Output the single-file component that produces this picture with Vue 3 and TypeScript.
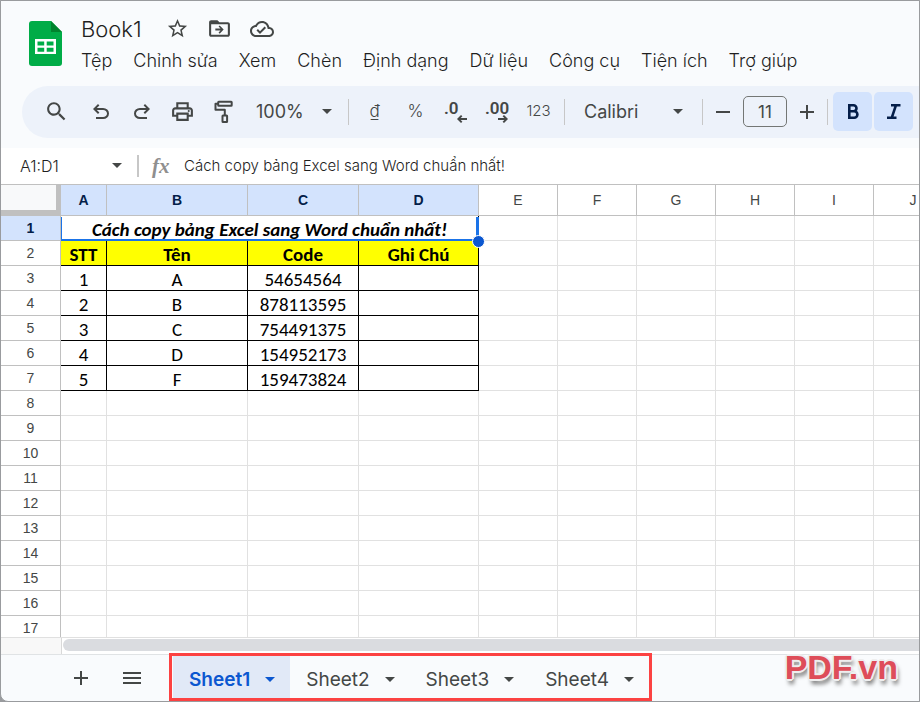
<script setup lang="ts">
import { ref } from 'vue'

interface Column { name: string; width: number }

const menus = ['Tệp', 'Chỉnh sửa', 'Xem', 'Chèn', 'Định dạng', 'Dữ liệu', 'Công cụ', 'Tiện ích', 'Trợ giúp']

const columns: Column[] = [
  { name: 'A', width: 46 },
  { name: 'B', width: 141 },
  { name: 'C', width: 111 },
  { name: 'D', width: 120 },
  ...['E', 'F', 'G', 'H', 'I', 'J'].map((name) => ({ name, width: 79 })),
]
const selectedColumns = 4
const tableWidth = 60 + columns.reduce((sum, c) => sum + c.width, 0)

const title = 'Cách copy bảng Excel sang Word chuẩn nhất!'
const data: string[][] = [
  ['STT', 'Tên', 'Code', 'Ghi Chú'],
  ['1', 'A', '54654564', ''],
  ['2', 'B', '878113595', ''],
  ['3', 'C', '754491375', ''],
  ['4', 'D', '154952173', ''],
  ['5', 'F', '159473824', ''],
]
const lastRow = 17

const cellText = (row: number, col: number): string => data[row - 2]?.[col] ?? ''
const cellClass = (row: number, col: number) => ({
  filled: row <= data.length + 1 && col < selectedColumns,
  heading: row === 2 && col < selectedColumns,
})

const sheets = ['Sheet1', 'Sheet2', 'Sheet3', 'Sheet4']
const active = ref('Sheet1')
const nameBox = ref('A1:D1')
const formula = ref(title)
const fontSize = ref('11')
</script>

<template>
  <div class="app">
    <header class="top">
      <div class="brand">
        <svg class="logo" viewBox="0 0 33 45" width="33" height="45" aria-hidden="true">
          <path fill="#00ac47" d="M3 0h19l11 11v31a3 3 0 0 1-3 3H3a3 3 0 0 1-3-3V3a3 3 0 0 1 3-3z" />
          <path fill="#00832d" d="M22 0l11 11H22z" />
          <path fill="#fff" fill-rule="evenodd" d="M6 18h21v15H6zM8.500 20.500v4h6.700v-4zM17.700 20.500v4h6.800v-4zM8.500 26.800v3.900h6.700v-3.900zM17.700 26.800v3.900h6.800v-3.900z" />
        </svg>
        <div class="heading-area">
          <div class="title-row">
            <h1>Book1</h1>
            <button class="plain" type="button" aria-label="Star">
              <svg viewBox="0 0 24 24" width="23" height="23"><path d="M22 9.240l-7.190-.620L12 2 9.190 8.630 2 9.240l5.460 4.730L5.820 21 12 17.270 18.180 21l-1.630-7.030L22 9.240zM12 15.400l-3.760 2.270 1-4.280-3.320-2.880 4.380-.380L12 6.100l1.710 4.040 4.380.380-3.320 2.880 1 4.280L12 15.400z" /></svg>
            </button>
            <button class="plain" type="button" aria-label="Move">
              <svg viewBox="0 0 24 24" width="25" height="25"><path d="M20 6h-8l-2-2H4c-1.100 0-2 .900-2 2v12c0 1.100.900 2 2 2h16c1.100 0 2-.900 2-2V8c0-1.100-.900-2-2-2zm0 12H4V8h16v10z" /><path d="M12.200 9l-1.100 1.100 1.900 2H8v1.800h5l-1.900 2 1.100 1.100L16 13z" /></svg>
            </button>
            <button class="plain" type="button" aria-label="Saved">
              <svg viewBox="0 0 24 24" width="24" height="24"><path d="M19.350 10.040C18.670 6.590 15.640 4 12 4 9.110 4 6.610 5.640 5.360 8.040 2.350 8.360 0 10.910 0 14c0 3.310 2.690 6 6 6h13c2.760 0 5-2.240 5-5 0-2.640-2.050-4.780-4.650-4.960zM19 18H6c-2.210 0-4-1.790-4-4 0-2.050 1.530-3.760 3.560-3.970l1.070-.110.500-.950C8.080 7.140 9.940 6 12 6c2.620 0 4.880 1.860 5.390 4.430l.300 1.500 1.530.110c1.560.100 2.780 1.410 2.780 2.960 0 1.650-1.350 3-3 3zm-9-3.820l-2.090-2.090L6.500 13.500 10 17l6.010-6.010-1.410-1.410z" /></svg>
            </button>
          </div>
          <nav class="menus">
            <button v-for="m in menus" :key="m" class="plain" type="button">{{ m }}</button>
          </nav>
        </div>
      </div>

      <div class="toolbar" role="toolbar">
        <button class="tool search" type="button" aria-label="Search">
          <svg viewBox="0 0 24 24" width="25" height="25"><path d="M15.500 14h-.790l-.280-.270C15.410 12.590 16 11.110 16 9.500 16 5.910 13.090 3 9.500 3S3 5.910 3 9.500 5.910 16 9.500 16c1.610 0 3.090-.590 4.230-1.570l.270.280v.790l5 4.990L20.490 19l-4.990-5zm-6 0C7.010 14 5 11.990 5 9.500S7.010 5 9.500 5 14 7.010 14 9.500 11.990 14 9.500 14z" /></svg>
        </button>
        <button class="tool" type="button" aria-label="Undo">
          <svg viewBox="0 0 24 24" width="24" height="24"><path d="M7 19v-2h7.100q1.575 0 2.738-1T18 13.500t-1.162-2.500T14.100 10H7.800l2.600 2.600L9 14 4 9l5-5 1.400 1.400L7.800 8h6.300q2.425 0 4.163 1.575T20 13.500t-1.737 3.925T14.100 19z" /></svg>
        </button>
        <button class="tool" type="button" aria-label="Redo">
          <svg viewBox="0 0 24 24" width="24" height="24"><path transform="translate(24 0) scale(-1 1)" d="M7 19v-2h7.100q1.575 0 2.738-1T18 13.500t-1.162-2.500T14.100 10H7.800l2.600 2.600L9 14 4 9l5-5 1.400 1.400L7.800 8h6.300q2.425 0 4.163 1.575T20 13.500t-1.737 3.925T14.100 19z" /></svg>
        </button>
        <button class="tool" type="button" aria-label="Print">
          <svg viewBox="0 0 24 24" width="25" height="25"><path d="M19 8h-1V3H6v5H5c-1.660 0-3 1.340-3 3v6h4v4h12v-4h4v-6c0-1.660-1.340-3-3-3zM8 5h8v3H8V5zm8 12v2H8v-4h8v2zm2-2v-2H6v2H4v-4c0-.550.450-1 1-1h14c.550 0 1 .450 1 1v4h-2z" /><circle cx="18" cy="11.500" r="1" /></svg>
        </button>
        <button class="tool" type="button" aria-label="Paint format">
          <svg viewBox="0 0 24 24" width="24" height="24"><g fill="none" stroke="currentColor" stroke-width="2" stroke-linejoin="round"><rect x="6.200" y="1.800" width="13.500" height="4" rx=".5" /><path d="M6 3.800H3.500v6h9.300v5.500" /><rect x="10.500" y="15.500" width="4.600" height="6.500" rx=".5" /></g></svg>
        </button>
        <span class="drop zoom">
          <select aria-label="Zoom"><option>100%</option></select>
          <svg viewBox="0 0 10 5" width="10" height="5"><path d="M0 0h10L5 5z" /></svg>
        </span>
        <i class="rule" />
        <button class="tool text" type="button">₫</button>
        <button class="tool text" type="button">%</button>
        <button class="tool dec" type="button" aria-label="Decrease decimals">
          <span>.0</span>
          <svg viewBox="0 0 10 8" width="10" height="8"><path d="M4 0l1.400 1.200L3.700 3H10v2H3.700l1.700 1.800L4 8 0 4z" /></svg>
        </button>
        <button class="tool dec" type="button" aria-label="Increase decimals">
          <span>.00</span>
          <svg viewBox="0 0 10 8" width="10" height="8"><path d="M6 0L4.600 1.200 6.300 3H0v2h6.300L4.600 6.800 6 8l4-4z" /></svg>
        </button>
        <button class="tool num" type="button">123</button>
        <i class="rule" />
        <span class="drop font">
          <select aria-label="Font"><option>Calibri</option></select>
          <svg viewBox="0 0 10 5" width="10" height="5"><path d="M0 0h10L5 5z" /></svg>
        </span>
        <i class="rule" />
        <button class="tool step" type="button" aria-label="Decrease font size">
          <svg viewBox="0 0 14 14" width="14" height="14"><path d="M0 6h14v2H0z" /></svg>
        </button>
        <input v-model="fontSize" class="size" aria-label="Font size" />
        <button class="tool step" type="button" aria-label="Increase font size">
          <svg viewBox="0 0 14 14" width="14" height="14"><path d="M0 6h6V0h2v6h6v2H8v6H6V8H0z" /></svg>
        </button>
        <i class="rule" />
        <button class="toggle" type="button" aria-pressed="true" aria-label="Bold">
          <svg viewBox="0 0 12 15" width="12" height="15"><path fill="none" stroke="currentColor" stroke-width="2.600" d="M2.300 1.300h4.200a3 3 0 0 1 0 6H2.300zM2.300 7.300h4.900a3.200 3.200 0 0 1 0 6.400H2.300z" /></svg>
        </button>
        <button class="toggle" type="button" aria-pressed="true" aria-label="Italic">
          <svg viewBox="0 0 14 15" width="14" height="15"><path fill="none" stroke="currentColor" stroke-width="2.600" d="M4 1.300h9.500M0 13.700h9.500M8.900 1.300L4.800 13.700" /></svg>
        </button>
      </div>
    </header>

    <div class="formula-bar">
      <input v-model="nameBox" class="name-box" aria-label="Name box" />
      <button class="plain" type="button" aria-label="Named ranges">
        <svg viewBox="0 0 10 5" width="10" height="5"><path d="M0 0h10L5 5z" /></svg>
      </button>
      <i class="bar" />
      <label class="fx" for="formula">fx</label>
      <input id="formula" v-model="formula" class="formula" />
    </div>

    <main class="grid">
      <table :style="{ width: tableWidth + 'px' }">
        <colgroup>
          <col class="row-col" />
          <col v-for="c in columns" :key="c.name" :style="{ width: c.width + 'px' }" />
        </colgroup>
        <thead>
          <tr>
            <td class="corner" />
            <th v-for="(c, i) in columns" :key="c.name" scope="col" :class="{ picked: i < selectedColumns }">{{ c.name }}</th>
          </tr>
        </thead>
        <tbody>
          <tr>
            <th scope="row" class="picked">1</th>
            <td class="merged" :colspan="selectedColumns">{{ title }}<span class="selection"><span class="handle" /></span></td>
            <td v-for="c in columns.slice(selectedColumns)" :key="c.name" />
          </tr>
          <tr v-for="r in lastRow - 1" :key="r">
            <th scope="row">{{ r + 1 }}</th>
            <td v-for="(c, i) in columns" :key="c.name" :class="cellClass(r + 1, i)">{{ cellText(r + 1, i) }}</td>
          </tr>
        </tbody>
      </table>
    </main>

    <div class="scroll">
      <div class="scroll-corner" />
      <div class="track"><div class="thumb" /></div>
    </div>

    <footer class="tabs-bar">
      <button class="plain add" type="button" aria-label="Add sheet">
        <svg viewBox="0 0 14 14" width="14" height="14"><path d="M0 6h6V0h2v6h6v2H8v6H6V8H0z" /></svg>
      </button>
      <button class="plain all" type="button" aria-label="All sheets">
        <svg viewBox="0 0 18 12" width="18" height="12"><path d="M0 0h18v2H0zM0 5h18v2H0zM0 10h18v2H0z" /></svg>
      </button>
      <div class="tabs" role="tablist">
        <button v-for="s in sheets" :key="s" type="button" role="tab" :aria-selected="s === active" :class="['tab', { active: s === active }]" @click="active = s">
          {{ s }}
          <svg viewBox="0 0 10 5" width="10" height="5"><path d="M0 0h10L5 5z" /></svg>
        </button>
      </div>
    </footer>
    <div class="watermark">PDF.vn</div>
  </div>
</template>

<style>
body { background: #999b9e; }
</style>

<style scoped>
* { box-sizing: border-box; }
.app {
  position: relative;
  display: flex;
  flex-direction: column;
  height: 100vh;
  overflow: hidden;
  border: 1px solid #999b9e;
  border-radius: 0 0 0 8px;
  background: #f9fbfd;
  color: #1f1f1f;
  font-family: Inter, "Liberation Sans", sans-serif;
}
button, input, select { margin: 0; padding: 0; border: 0; background: none; color: inherit; font: inherit; outline: 0; }
svg { display: block; fill: currentColor; flex: none; }
.plain { display: flex; align-items: center; justify-content: center; color: #444746; white-space: nowrap; }

.top { flex: none; padding: 12px 0 10px; overflow: hidden; }
.brand { display: flex; padding-left: 28px; gap: 19px; }
.logo { margin-top: 8px; }
.title-row { display: flex; align-items: center; height: 31px; gap: 18px; }
h1 { margin: 0 6px 0 0; font-size: 22px; font-weight: 300; line-height: 30px; }
.menus { display: flex; height: 34px; gap: 21px; }
.menus .plain { color: #1f1f1f; font-size: 18px; font-weight: 300; line-height: 24px; }

.toolbar { display: flex; align-items: center; height: 52px; margin: 8px 0 0 21px; padding: 0 0 1px 14px; border-radius: 26px 0 0 26px; background: #edf2fa; color: #444746; }
.tool { display: flex; align-items: center; justify-content: center; flex: none; width: 41px; height: 40px; }
.search { margin-right: 3px; }
.drop { display: grid; flex: none; align-items: center; height: 40px; }
.drop > * { grid-area: 1 / 1; }
.drop svg { justify-self: end; pointer-events: none; }
.drop select { width: 100%; height: 40px; appearance: none; font-size: 18px; }
.zoom { width: 99px; padding: 0 11px 0 12px; }
.font { width: 127px; padding: 0 14px 2px; }
.rule { flex: none; width: 1px; height: 26px; margin: 0 5px; background: #c7c7c7; }
.text { padding-bottom: 2px; font-size: 17px; font-weight: 300; }
.num { padding-bottom: 2px; font-size: 15px; font-weight: 300; }
.dec { flex-direction: column; font: 600 17px/14px Roboto, sans-serif; }
.dec span { align-self: start; margin-left: 8px; }
.dec svg { align-self: end; margin-right: 10px; }
.step { width: 30px; }
.size { flex: none; width: 44px; height: 31px; margin: 0 5px; border: 1px solid #747775; border-radius: 5px; font-size: 17px; text-align: center; }
.toggle { display: flex; align-items: center; justify-content: center; flex: none; width: 39px; height: 39px; border-radius: 5px; background: #d3e3fd; color: #041e49; }
.toggle + .toggle { margin-left: 2px; }

.formula-bar { display: flex; align-items: center; flex: none; height: 37px; padding: 0 0 1px 19px; border-bottom: 1px solid #c0c0c0; background: #fff; }
.name-box { width: 92px; font-size: 16px; font-weight: 300; }
.bar { width: 2px; height: 22px; margin: 0 13px 0 15px; background: #c7c7c7; }
.fx { width: 32px; color: #8f8f8f; font: italic bold 21px/30px "Liberation Serif", serif; }
.formula { flex: 1; min-width: 0; font-size: 15px; font-weight: 300; }

.grid { flex: 1; min-height: 0; overflow: hidden; border-bottom: 1px solid #e0e0e0; background: #fff; }
table { table-layout: fixed; border-collapse: separate; border-spacing: 0; }
.row-col { width: 60px; }
th, td { height: 25px; padding: 0; overflow: hidden; border: solid #e1e1e1; border-width: 0 1px 1px 0; text-align: center; white-space: nowrap; }
th { border-color: #c0c0c0; color: #444746; font: 14px/16px "Liberation Sans", sans-serif; }
td { font: 19px/20px Carlito, Lato, sans-serif; color: #000; vertical-align: bottom; }
thead th, thead td { height: 31px; }
.corner { border: solid #c0c0c0; border-width: 0 5px 6px 0; background: #f8f9fa; }
.picked { background: #d3e3fd; color: #041e49; font-weight: bold; }
.filled { border-color: #000; }
.heading { background: #ff0; font-weight: bold; }
.merged { position: relative; overflow: visible; border-color: #000; font-weight: bold; font-style: italic; }
.selection { position: absolute; inset: 1px -1px -1px 0; border: solid #1a73e8; border-width: 0 3px 2px 1px; }
.handle { position: absolute; right: -9px; bottom: -9px; width: 13px; height: 13px; border: 1px solid #fff; border-radius: 50%; background: #0b57d0; }

.scroll { display: flex; flex: none; height: 16px; background: #fff; }
.scroll-corner { width: 61px; border-right: 1px solid #d9d9d9; background: #f8f8f8; }
.track { flex: 1; padding: 1px 0 0 1px; }
.thumb { height: 12px; border-radius: 6px 0 0 6px; background: #dadce0; }

.tabs-bar { display: flex; align-items: center; flex: none; height: 47px; border-top: 1px solid #e0e3e5; }
.add { width: 40px; height: 40px; margin-left: 60px; }
.all { width: 40px; height: 40px; margin: 0 17px 0 11px; }
.tabs { display: flex; height: 48px; margin-top: -2px; padding-left: 1px; border: 3px solid #fc4242; }
.tab { display: flex; align-items: center; gap: 15px; padding: 4px 15px 0 16px; color: #444746; font-size: 19px; font-weight: 400; white-space: nowrap; }
.tab.active { background: #e1e9f7; color: #0b57d0; font-weight: 600; }
.watermark {
  position: absolute;
  right: 21px;
  bottom: 14px;
  color: #de4d59;
  font: bold 34px/40px "Liberation Sans", sans-serif;
  text-shadow: 2px 0 #eee, -2px 0 #eee, 0 2px #eee, 0 -2px #eee, 1px 1px #eee, -1px -1px #eee, 1px -1px #eee, -1px 1px #eee, 2px 5px 4px #777;
}
</style>
